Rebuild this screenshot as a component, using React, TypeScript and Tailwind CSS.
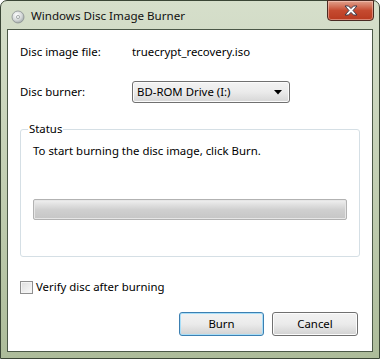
function DiscIcon() {
  return (
    <svg width="14" height="14" viewBox="0 0 14 14">
      <defs>
        <radialGradient id="dg" cx="40%" cy="35%" r="70%">
          <stop offset="0%" stopColor="#ffffff" />
          <stop offset="60%" stopColor="#d4d8d8" />
          <stop offset="100%" stopColor="#9ca4a4" />
        </radialGradient>
      </defs>
      <circle cx="7" cy="7" r="6" fill="url(#dg)" stroke="#8a9090" strokeWidth="0.8" />
      <circle cx="7" cy="7" r="1.6" fill="#eef2f2" stroke="#7d8585" strokeWidth="0.6" />
    </svg>
  );
}

function CloseButton() {
  return (
    <div className="-mt-px mr-[5px] flex h-[21px] w-[47px] items-center justify-center rounded-b-[4px] border border-[#4a2a22] bg-gradient-to-b from-[#e0a08c] via-[#c54a30] to-[#b93a20] shadow-[inset_0_0_0_1px_rgba(255,220,210,0.45)]">
      <svg width="14" height="11" viewBox="0 0 14 11">
        <path
          d="M1 1 L4.5 1 L7 3.6 L9.5 1 L13 1 L9 5.5 L13 10 L9.5 10 L7 7.4 L4.5 10 L1 10 L5 5.5 Z"
          fill="#ffffff"
          stroke="#3a3a4a"
          strokeWidth="1"
          strokeLinejoin="round"
        />
      </svg>
    </div>
  );
}

function Button({ label, focused }: { label: string; focused?: boolean }) {
  return (
    <div
      className={
        focused
          ? "flex h-[24px] w-[85px] items-center justify-center rounded-[3px] border border-[#3c7fb1] bg-gradient-to-b from-[#f2f2f2] via-[#ebebeb] to-[#d2d2d2] shadow-[inset_0_0_0_1px_#a8def8]"
          : "flex h-[24px] w-[86px] items-center justify-center rounded-[3px] border border-[#707070] bg-gradient-to-b from-[#f2f2f2] via-[#ebebeb] to-[#d2d2d2] shadow-[inset_0_0_0_1px_#fcfcfc]"
      }
    >
      {label}
    </div>
  );
}

export default function App() {
  return (
    <div
      className="flex h-[359px] w-[380px] flex-col rounded-t-[7px] border border-[#3b4636] bg-gradient-to-b from-[#d6dfcb] via-[#c3cfb3] to-[#adbc9a] text-black"
      style={{ fontFamily: '"Noto Sans", "Open Sans", sans-serif' }}
    >
      <div className="flex h-[28px] items-start">
        <div className="ml-[10px] mt-[9px]">
          <DiscIcon />
        </div>
        <div className="ml-[6px] mt-[6px] flex-1 text-[11.6px] leading-[18px] text-[#111]">
          Windows Disc Image Burner
        </div>
        <CloseButton />
      </div>

      <div className="mx-[6px] mb-[6px] flex flex-1 flex-col border border-[#4b5847] bg-white text-[11.4px]">
        <div className="mt-[13px] flex h-[18px] items-center pl-[12px]">
          <span className="w-[112px]">Disc image file:</span>
          <span>truecrypt_recovery.iso</span>
        </div>

        <div className="mt-[20px] flex items-center pl-[12px]">
          <span className="w-[112px]">Disc burner:</span>
          <div className="flex h-[22px] w-[158px] items-center justify-between rounded-[3px] border border-[#707070] bg-gradient-to-b from-[#f3f3f3] via-[#ebebeb] to-[#d6d6d6] pl-[4px] pr-[7px] shadow-[inset_0_0_0_1px_#fbfbfb]">
            <span>BD-ROM Drive (I:)</span>
            <svg width="8" height="5" viewBox="0 0 8 5">
              <path d="M0 0 L8 0 L4 4.5 Z" fill="#000" />
            </svg>
          </div>
        </div>

        <div className="relative mx-[12px] mt-[26px] h-[128px] rounded-[3px] border border-[#d5dfe5]">
          <span className="absolute -top-[10px] left-[7px] bg-white px-[1px] leading-[18px]">Status</span>
          <div className="ml-[12px] mt-[12px] leading-[18px]">
            To start burning the disc image, click Burn.
          </div>
          <div className="mx-[12px] mt-[39px] h-[21px] rounded-[2px] border border-[#b2b2b2] bg-gradient-to-b from-[#f0f0f0] via-[#d0d0d0] to-[#c6c6c6] shadow-[inset_0_0_0_1px_#e6e6e6]" />
        </div>

        <div className="mt-[21px] flex items-center pl-[12px]">
          <div className="h-[13px] w-[13px] border border-[#8f8f8f] bg-gradient-to-br from-[#dedede] to-[#fafafa] shadow-[inset_0_0_0_1px_#f4f4f4]" />
          <span className="ml-[3px] leading-[18px]">Verify disc after burning</span>
        </div>

        <div className="mt-[16px] flex justify-end gap-[8px] pr-[14px]">
          <Button label="Burn" focused />
          <Button label="Cancel" />
        </div>
      </div>
    </div>
  );
}
